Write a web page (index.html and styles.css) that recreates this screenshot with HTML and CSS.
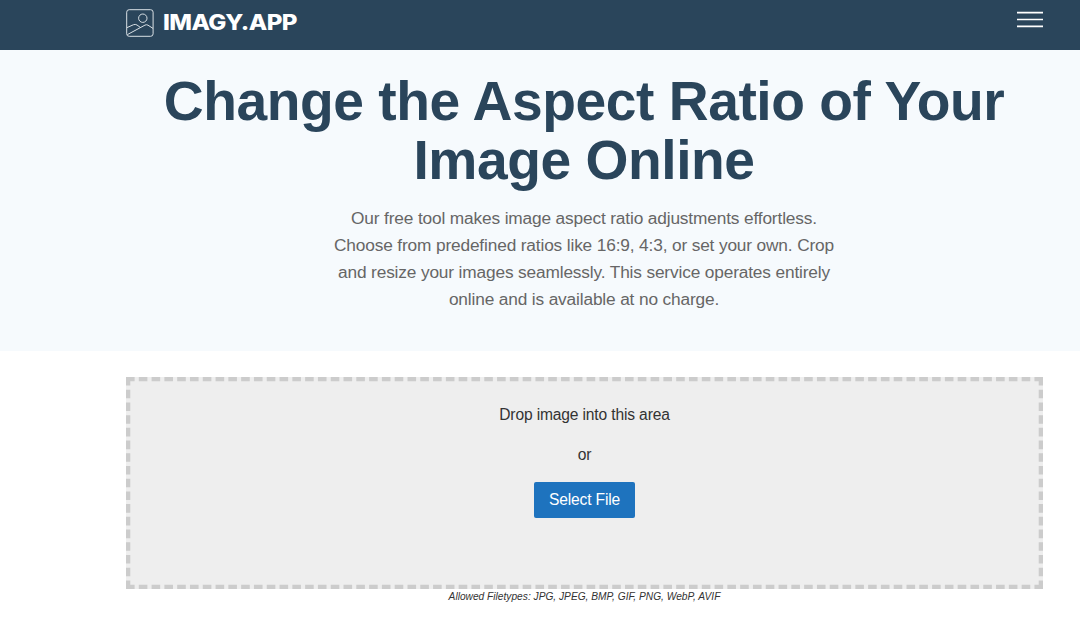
FILE: index.html
```html
<!DOCTYPE html>
<html lang="en">
<head>
<meta charset="utf-8">
<title>Imagy.app</title>
<link rel="stylesheet" href="styles.css">
</head>
<body>
<header class="site-header">
  <a class="brand">
    <svg class="brand-icon" width="28" height="28" viewBox="0 0 28 28" fill="none" stroke="#d9e0e5" stroke-width="1">
      <rect x=".7" y=".7" width="26.4" height="26.6" rx="2.5"/>
      <circle cx="16.8" cy="9.2" r="4.2"/>
      <path d="M1 18.600L7.500 15.700Q9.300 15 11 16L14 18.200M1.400 25.600L19 16.100Q20.500 15.300 22 16.200L27 19.400"/>
    </svg>
    <svg class="brand-name" width="136" height="28" viewBox="0 0 136 28"><text x="-1" y="21.300" textLength="134" lengthAdjust="spacingAndGlyphs">IMAGY.APP</text></svg>
  </a>
  <svg class="menu" width="26" height="17" viewBox="0 0 26 17" stroke="#fff" stroke-width="1.7"><path d="M0 1.700H26M0 8.500H26M0 15.300H26"/></svg>
</header>
<section class="hero">
  <h1>Change the Aspect Ratio of Your<br>Image Online</h1>
  <p>Our free tool makes image aspect ratio adjustments effortless.<br>Choose from predefined ratios like 16:9, 4:3, or set your own. Crop<br>and resize your images seamlessly. This service operates entirely<br>online and is available at no charge.</p>
</section>
<main class="content">
  <div class="dropzone">
    <svg class="dashes" width="917" height="212" viewBox="0 0 917 212">
      <path class="dash-x" d="M0 2.150H917M0 209.850H917"/>
      <path class="dash-y" d="M2.150 0V212M914.850 0V212"/>
    </svg>
    <p>Drop image into this area</p>
    <p>or</p>
    <button>Select File</button>
  </div>
  <p class="note">Allowed Filetypes: JPG, JPEG, BMP, GIF, PNG, WebP, AVIF</p>
</main>
</body>
</html>
```
FILE: styles.css
```css
* { box-sizing: border-box; }
body { margin: 0; background: #fff; color: #333; font-family: "Liberation Sans", Arial, sans-serif; font-size: 15.6px; letter-spacing: -.15px; overflow: hidden; }
p, h1 { margin: 0; }
.site-header { height: 50px; background: #2a455b; display: flex; justify-content: space-between; align-items: flex-start; padding: 9px 37px 0 126px; }
.brand { display: flex; gap: 10px; }
.brand-name { overflow: visible; }
.brand-name text { font-family: Inter, sans-serif; font-size: 21.4px; font-weight: 800; letter-spacing: -.5px; fill: #fff; }
.menu { margin-top: 2px; }
.hero { height: 301px; background: #f6fafd; text-align: center; padding: 22px 38px 0 126px; white-space: nowrap; }
.hero h1 { color: #2a455b; font-size: 55.2px; line-height: 59.4px; letter-spacing: -.45px; }
.hero p { color: #666; font-size: 17.3px; line-height: 27.2px; margin-top: 14px; letter-spacing: -.15px; }
.content { padding: 26px 37px 0 126px; text-align: center; }
.dropzone { position: relative; height: 212px; background: #eee; padding-top: 25px; display: flex; flex-direction: column; align-items: center; }
.dropzone p { line-height: 26px; margin-bottom: 14px; }
.dashes { position: absolute; left: 0; top: 0; }
.dashes path { fill: none; stroke: #ccc; stroke-width: 4.3; }
.dash-x { stroke-dasharray: 8.6 4.195; }
.dash-y { stroke-dasharray: 8.6 4.112; }
.dropzone button { width: 101px; height: 36px; border: 0; border-radius: 2px; background: #1e73be; color: #fff; font: 15.6px "Liberation Sans", Arial, sans-serif; letter-spacing: -.15px; padding: 0; }
.note { font-size: 10.2px; letter-spacing: 0; font-style: italic; line-height: 16px; }
```
